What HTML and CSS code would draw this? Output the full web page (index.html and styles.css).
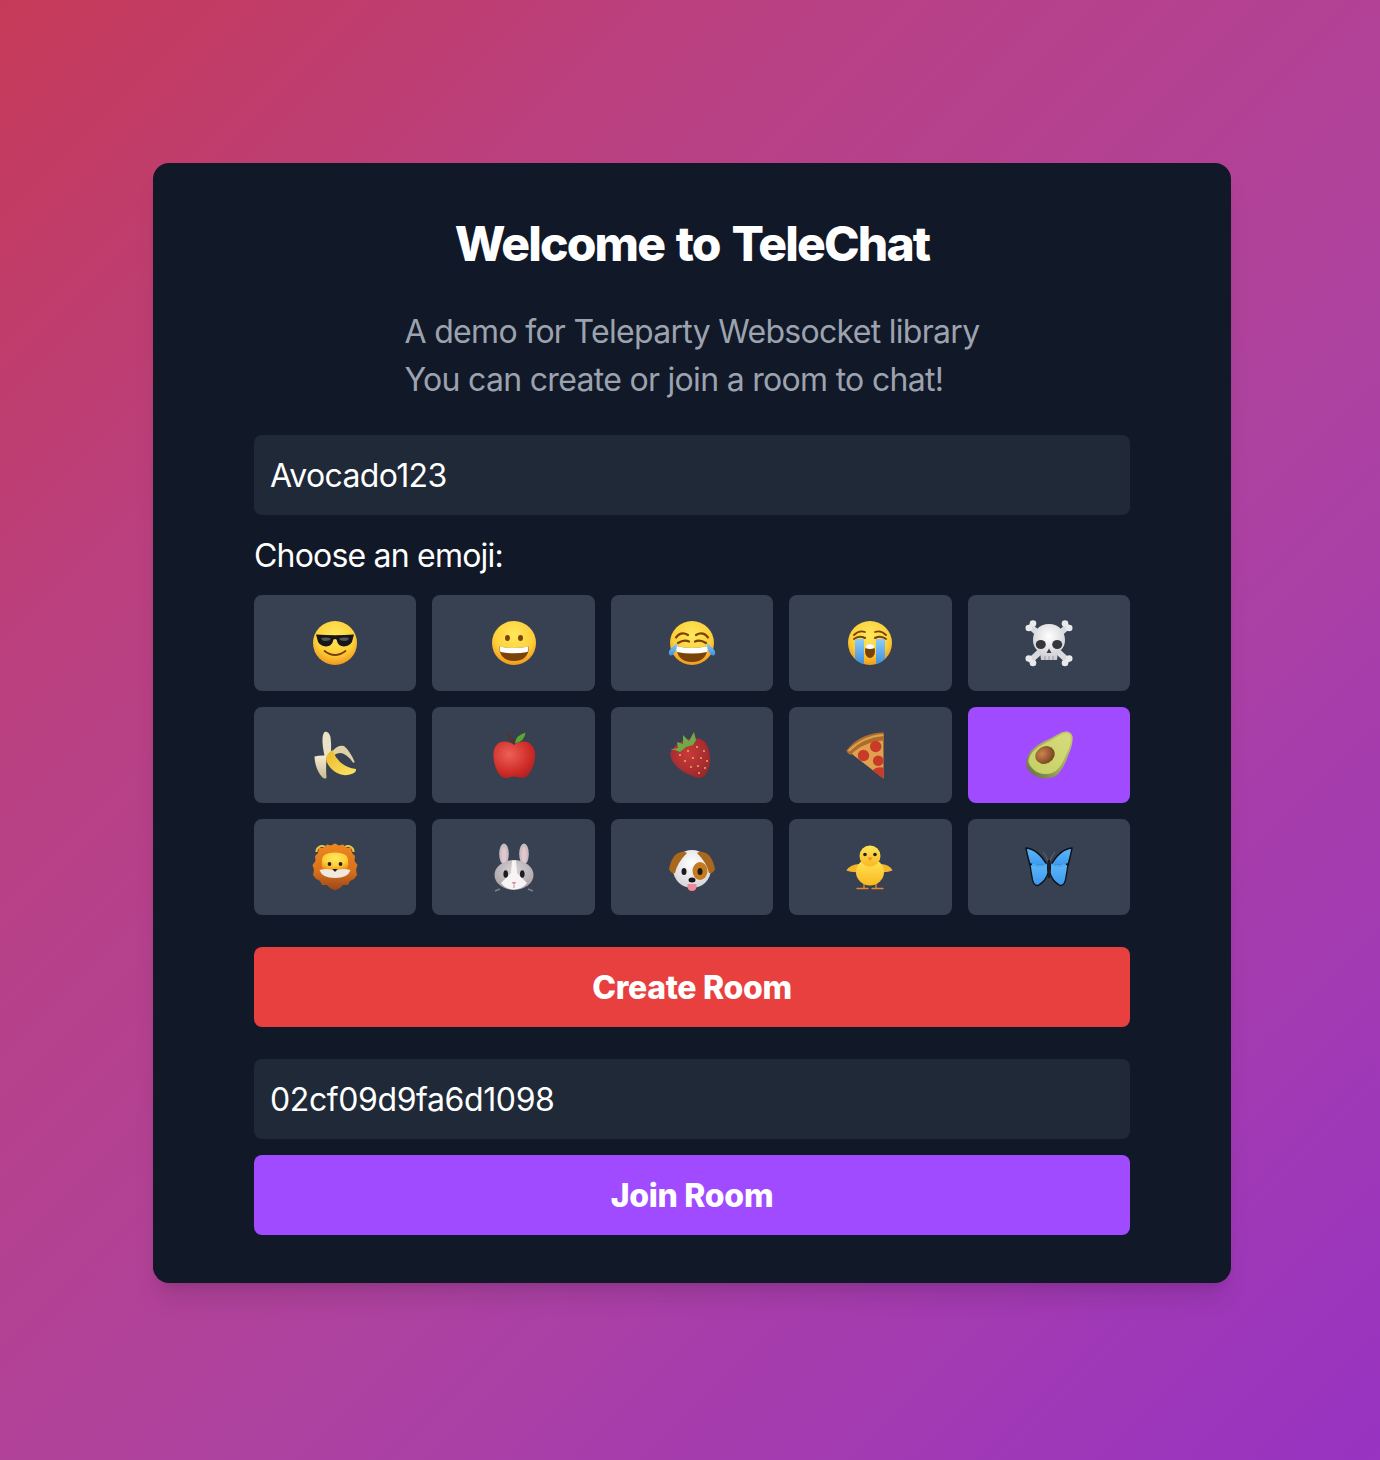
FILE: index.html
```html
<!DOCTYPE html>
<html lang="en">
<head>
<meta charset="utf-8">
<title>TeleChat</title>
<link rel="stylesheet" href="styles.css">
</head>
<body>
<main class="card">
  <h1 class="title">Welcome to TeleChat</h1>
  <p class="subtitle">A demo for Teleparty Websocket library<br>You can create or join a room to chat!</p>
  <div class="stack">
    <input class="field name" type="text" value="Avocado123" aria-label="Nickname">
    <div class="label">Choose an emoji:</div>
    <div class="emoji-grid">
      <button class="emoji-btn" aria-label="smiling face with sunglasses"><svg class="emoji" viewBox="0 0 48 48">
        <defs>
          <radialGradient id="face" cx=".5" cy=".32" r=".72"><stop offset="0" stop-color="#ffe85c"/><stop offset=".62" stop-color="#fdcf38"/><stop offset="1" stop-color="#ef8f1a"/></radialGradient>
          <linearGradient id="tear" x1="0" y1="0" x2="0" y2="1"><stop offset="0" stop-color="#8ccdf5"/><stop offset="1" stop-color="#3f8fe0"/></linearGradient>
          <radialGradient id="red" cx=".38" cy=".35" r=".78"><stop offset="0" stop-color="#ec6156"/><stop offset=".65" stop-color="#cf2b27"/><stop offset="1" stop-color="#a31e22"/></radialGradient>
          <radialGradient id="straw" cx=".45" cy=".4" r=".7"><stop offset="0" stop-color="#c93a3a"/><stop offset="1" stop-color="#98252a"/></radialGradient>
          <linearGradient id="yellowfruit" x1="0" y1="0" x2="1" y2="1"><stop offset="0" stop-color="#edb925"/><stop offset="1" stop-color="#fbe46a"/></linearGradient>
          <linearGradient id="peel" x1="0" y1="0" x2="0" y2="1"><stop offset="0" stop-color="#f4ecd2"/><stop offset="1" stop-color="#c9bb90"/></linearGradient>
          <radialGradient id="bone" cx=".5" cy=".35" r=".78"><stop offset="0" stop-color="#ffffff"/><stop offset="1" stop-color="#c2c3c7"/></radialGradient>
          <linearGradient id="avoskin" x1="1" y1="0" x2="0" y2="1"><stop offset="0" stop-color="#c5cc6c"/><stop offset=".6" stop-color="#9ba35a"/><stop offset="1" stop-color="#5f6648"/></linearGradient>
          <linearGradient id="avoflesh" x1="1" y1="0" x2="0" y2="1"><stop offset="0" stop-color="#d6db7c"/><stop offset="1" stop-color="#c3d063"/></linearGradient>
          <radialGradient id="pit" cx=".4" cy=".35" r=".8"><stop offset="0" stop-color="#cc864c"/><stop offset="1" stop-color="#66341a"/></radialGradient>
          <linearGradient id="chick" x1="0" y1="0" x2="0" y2="1"><stop offset="0" stop-color="#ffe65a"/><stop offset="1" stop-color="#f9b820"/></linearGradient>
          <linearGradient id="wing" x1="0" y1="0" x2="0" y2="1"><stop offset="0" stop-color="#5cb8fa"/><stop offset="1" stop-color="#3c96ee"/></linearGradient>
          <linearGradient id="mane" x1="0" y1="0" x2="0" y2="1"><stop offset="0" stop-color="#ee8a1e"/><stop offset=".6" stop-color="#d8701b"/><stop offset="1" stop-color="#9a451a"/></linearGradient>
          <radialGradient id="white" cx=".5" cy=".35" r=".75"><stop offset="0" stop-color="#ffffff"/><stop offset="1" stop-color="#cfcfd3"/></radialGradient>
          <radialGradient id="rabbit" cx=".5" cy=".35" r=".8"><stop offset="0" stop-color="#d8d4d6"/><stop offset="1" stop-color="#9e979c"/></radialGradient>
        </defs>
        <circle cx="24" cy="24" r="22" fill="url(#face)"/>
        <path d="M5 15.500Q24 17 43 15.500L42 19Q41 27 33 27.500Q27 27.500 25.500 20.500Q24 19.500 22.500 20.500Q21 27.500 15 27.500Q7 27 6 19Z" fill="#17171a"/>
        <path d="M10 19Q16 18 20 19.500Q19 22 14 22Q11 22 10 19ZM28 19.500Q33 18 38 19Q37 22 34 22Q29 22 28 19.500Z" fill="#55575c"/>
        <path d="M13.500 32Q24 40 34.500 32" fill="none" stroke="#7a3d08" stroke-width="1.800" stroke-linecap="round"/>
      </svg></button>
      <button class="emoji-btn" aria-label="grinning face"><svg class="emoji" viewBox="0 0 48 48">
        <circle cx="24" cy="24" r="22" fill="url(#face)"/>
        <ellipse cx="17.500" cy="19" rx="2.500" ry="3" fill="#7a4209"/>
        <ellipse cx="30.500" cy="19" rx="2.500" ry="3" fill="#7a4209"/>
        <path d="M9 27.500Q24 30.500 39 27.500Q38.500 42 24 42Q9.500 42 9 27.500Z" fill="#7a4209"/>
        <path d="M9.500 27.500Q24 30.500 38.500 27.500Q38.500 31 37.500 33Q24 35.500 10.500 33Q9.500 31 9.500 27.500Z" fill="#fff"/>
      </svg></button>
      <button class="emoji-btn" aria-label="face with tears of joy"><svg class="emoji" viewBox="0 0 48 48">
        <circle cx="24" cy="24" r="22" fill="url(#face)"/>
        <path d="M8 18.500Q13 12 20 16M40 18.500Q35 12 28 16" fill="none" stroke="#7a4209" stroke-width="2.200" stroke-linecap="round"/>
        <path d="M10 24Q16 20 21 22.500M38 24Q32 20 27 22.500" fill="none" stroke="#7a4209" stroke-width="2.200" stroke-linecap="round"/>
        <path d="M8 27Q24 31 40 27Q39 43 24 43Q9 43 8 27Z" fill="#7a4209"/>
        <path d="M8 27Q24 31 40 27Q40 31 39 33Q24 36 9 33Q8 31 8 27Z" fill="#fff"/>
        <path d="M9 24Q9 30 7 33Q4 38 1.500 36Q-.5 33 3 29.500Q6 26.500 9 24Z" fill="url(#tear)"/>
        <path d="M39 24Q39 30 41 33Q44 38 46.500 36Q48.500 33 45 29.500Q42 26.500 39 24Z" fill="url(#tear)"/>
      </svg></button>
      <button class="emoji-btn" aria-label="loudly crying face"><svg class="emoji" viewBox="0 0 48 48">
        <circle cx="24" cy="24" r="22" fill="url(#face)"/>
        <path d="M8 16Q13 11 19 13M40 16Q35 11 29 13" fill="none" stroke="#7a4209" stroke-width="1.800" stroke-linecap="round"/>
        <path d="M8 20Q13 16 19 19M40 20Q35 16 29 19" fill="none" stroke="#7a4209" stroke-width="2" stroke-linecap="round"/>
        <path d="M9 20H18V45Q13 44 9 39.500ZM30 20H39V39.500Q35 44 30 45Z" fill="url(#tear)"/>
        <ellipse cx="24" cy="32" rx="5" ry="7" fill="#7a4209"/>
        <path d="M19.500 29Q20 25 24 25Q28 25 28.500 29Q24 31 19.500 29Z" fill="#fff"/>
      </svg></button>
      <button class="emoji-btn" aria-label="skull and crossbones"><svg class="emoji" viewBox="0 0 48 48">
        <g stroke="#d9dadd" stroke-width="6" stroke-linecap="round"><path d="M6 8L42 41"/><path d="M42 8L6 41"/></g>
        <g fill="#e8e9eb"><circle cx="3.800" cy="9" r="3.300"/><circle cx="8" cy="4.500" r="3.300"/><circle cx="44.200" cy="9" r="3.300"/><circle cx="40" cy="4.500" r="3.300"/><circle cx="3.800" cy="39.500" r="3.300"/><circle cx="8" cy="44" r="3.300"/><circle cx="44.200" cy="39.500" r="3.300"/><circle cx="40" cy="44" r="3.300"/></g>
        <path d="M24 5C14 5 8 12 8 21C8 27 11 31 15 33L16 41H32L33 33C37 31 40 27 40 21C40 12 34 5 24 5Z" fill="url(#bone)"/>
        <ellipse cx="15.800" cy="25.500" rx="5" ry="4.600" fill="#35353a"/>
        <ellipse cx="32.200" cy="25.500" rx="5" ry="4.600" fill="#35353a"/>
        <path d="M24 29.500L26.500 34H21.500Z" fill="#3c3c42"/>
        <path d="M20 37V41M24 37V41M28 37V41" stroke="#9a9ba0" stroke-width="1"/>
      </svg></button>
      <button class="emoji-btn" aria-label="banana"><svg class="emoji" viewBox="0 0 48 48">
        <path d="M14 .8Q18 .5 19.500 6Q20.500 13 20 21L14 27Q11 14 11.500 7Q12 2 14 .8Z" fill="#ebe3c6"/>
        <path d="M22 19.500Q27 13.500 33 15Q39 20 43.500 30.500Q44 32 42 31.500Q36 23 30 22Q25 22 22 25Z" fill="#dfd2a6"/>
        <path d="M3.500 25.500Q8 24 16 24.500Q14.500 34 15.500 47Q13.500 48.500 11 46Q4 38 3.500 25.500Z" fill="url(#peel)"/>
        <path d="M21.500 19Q24 26 29 31Q36 37 45 38Q45.500 41 42 42.500Q33 46 26 42Q16.500 36.500 15 28Q16 22 21.500 19Z" fill="url(#yellowfruit)"/>
      </svg></button>
      <button class="emoji-btn" aria-label="red apple"><svg class="emoji" viewBox="0 0 48 48">
        <path d="M24 13.500C18 9.500 10 9.500 6.500 14C3 18 3 24 4 30C5.500 39 10 47 15.500 47C19 47.200 21 45.500 24 45.500C27 45.500 29 47.200 32.500 47C38 47 42.500 39 44.500 30C45.500 24 45.500 18 41.500 14C38 9.500 30 9.500 24 13.500Z" fill="url(#red)"/>
        <path d="M24 13Q23 8 17 3.500" fill="none" stroke="#5c3322" stroke-width="1.700" stroke-linecap="round"/>
        <path d="M25 12.500Q26 4 35.500 1.500Q35 10 25 12.500Z" fill="#5aa832"/>
      </svg></button>
      <button class="emoji-btn" aria-label="strawberry"><svg class="emoji" viewBox="0 0 48 48">
        <path d="M2.500 21Q10 9 23 7.500Q38 5 41 20Q44 34 38 43Q34 49 27 46Q12 41 5 31Q2 26 2.500 21Z" fill="url(#straw)"/>
        <path d="M2 18.500L10 17L9 11L15 13L15 4L21 10L26 1L28 9L25 14L18 16L12 21L7 19Z" fill="#6faa4a"/>
        <g fill="#e8c25a"><circle cx="12" cy="24" r=".9"/><circle cx="20" cy="20" r=".9"/><circle cx="29" cy="16" r=".9"/><circle cx="36" cy="20" r=".9"/><circle cx="17" cy="30" r=".9"/><circle cx="25" cy="27" r=".9"/><circle cx="33" cy="27" r=".9"/><circle cx="39" cy="30" r=".9"/><circle cx="23" cy="36" r=".9"/><circle cx="30" cy="35" r=".9"/><circle cx="37" cy="37" r=".9"/><circle cx="31" cy="42" r=".9"/></g>
      </svg></button>
      <button class="emoji-btn" aria-label="pizza"><svg class="emoji" viewBox="0 0 48 48">
        <path d="M2 20L37.500 5L37.500 47.500Z" fill="#e0a050"/>
        <path d="M.3 19.500Q14 2 37.500 1.300L38 9.500Q17 11 4.500 24Q1 22.500 .3 19.500Z" fill="#ad6c2a"/>
        <path d="M2.500 20Q17 5.500 37.500 4" fill="none" stroke="#dca052" stroke-width="2"/>
        <g fill="#c93b26"><circle cx="29.700" cy="15.500" r="5.700"/><circle cx="17.500" cy="24.500" r="5.700"/><circle cx="32.200" cy="29.700" r="5.300"/><path d="M37.500 36.500L37.500 47.500L26.500 39.500Q30 35 37.500 36.500Z"/></g>
      </svg></button>
      <button class="emoji-btn active" aria-label="avocado"><svg class="emoji" viewBox="0 0 48 48">
        <path d="M41.700 .3Q47.500 1.500 47.700 7.300Q47.500 15 43.300 24Q40 34 35 40.700Q30 47 23.300 47.300Q14 48 8.300 44Q1 39 1 32.300Q1.500 25 6.700 19Q11.500 14 18.300 10.700Q26 7.500 31.700 4Q37 .5 41.700 .3Z" fill="url(#avoskin)"/>
        <path d="M41 2Q46 3 46 8Q45.500 15 41 24Q38 32 33 38Q28 43 21 43Q12 43 7 37Q3 33 3.500 29Q5 23 9 19.500Q14 15 19.500 12.500Q27 9 32.500 5.500Q37 2.500 41 2Z" fill="url(#avoflesh)"/>
        <ellipse cx="20" cy="24" rx="10" ry="8.500" transform="rotate(-30 20 24)" fill="url(#pit)"/>
      </svg></button>
      <button class="emoji-btn" aria-label="lion"><svg class="emoji" viewBox="0 0 48 48">
        <path d="M5.500 9A5.500 5.500 0 0 1 14 4M42.500 9A5.500 5.500 0 0 0 34 4" fill="none" stroke="#f0c542" stroke-width="2"/>
        <path d="M24 .5L28 2.500L32 1.500L36 5L40 5L41 10L44 13L43.500 18L46.500 22L45 27L46 32L43 36L39 38L37 42L32 42L29 45L24 47.500L19 45L16 42L11 42L9 38L5 36L2 32L3 27L1.500 22L4.500 18L4 13L7 10L8 5L12 5L16 1.500L20 2.500Z" fill="url(#mane)"/>
        <path d="M11 16Q12 9.500 24 9.500Q36 9.500 37 16Q38 22 36 27H12Q10 22 11 16Z" fill="url(#face)"/>
        <path d="M8.500 27Q18 24.500 24 28Q30 24.500 39.500 27Q37 35 24 35Q11 35 8.500 27Z" fill="#f0e9de"/>
        <circle cx="18.500" cy="21" r="1.900" fill="#2a1a0c"/>
        <circle cx="29.500" cy="21" r="1.900" fill="#2a1a0c"/>
        <path d="M21.500 26H26.500L24 29Z" fill="#2a1a0c"/>
      </svg></button>
      <button class="emoji-btn" aria-label="rabbit"><svg class="emoji" viewBox="0 0 48 48">
        <ellipse cx="14" cy="11" rx="4.800" ry="10.500" fill="#c7bec3"/>
        <ellipse cx="34" cy="11" rx="4.800" ry="10.500" fill="#c7bec3"/>
        <ellipse cx="14" cy="12" rx="2.400" ry="8" fill="#e5c6cf"/>
        <ellipse cx="34" cy="12" rx="2.400" ry="8" fill="#e5c6cf"/>
        <path d="M10 46L5 48M38 46L43 48" stroke="#78818c" stroke-width="1.400"/>
        <ellipse cx="24" cy="32" rx="19.500" ry="15" fill="url(#rabbit)"/>
        <path d="M22 17.500H26L27 30L37 40Q32 46.500 24 46.500Q16 46.500 11 40L21 30Z" fill="#f6f4f4"/>
        <ellipse cx="15.700" cy="31" rx="2.300" ry="3.800" fill="#1e1c20"/>
        <ellipse cx="32.300" cy="31" rx="2.300" ry="3.800" fill="#1e1c20"/>
        <path d="M21.500 39H26.500L24 42Z" fill="#e58aa0"/>
        <path d="M24 42V45" stroke="#a39ca1" stroke-width="1"/>
      </svg></button>
      <button class="emoji-btn" aria-label="dog"><svg class="emoji" viewBox="0 0 48 48">
        <circle cx="24" cy="26" r="19" fill="url(#white)"/>
        <ellipse cx="32" cy="28" rx="7.500" ry="9" fill="#c47a1e"/>
        <path d="M13 9Q4 11 1 26Q3 31 7 30Q9 20 19 10Q16 8 13 9Z" fill="#a9681c"/>
        <path d="M35 9Q44 11 47 26Q45 31 41 30Q39 20 29 10Q32 8 35 9Z" fill="#a9681c"/>
        <ellipse cx="16" cy="28.500" rx="2.500" ry="3.500" fill="#1c1a1c"/>
        <ellipse cx="32" cy="28.500" rx="2.500" ry="3.500" fill="#1c1a1c"/>
        <ellipse cx="24" cy="37" rx="3.500" ry="2.500" fill="#18161a"/>
        <path d="M19.500 41H28.500V44Q28 48 24 48Q20 48 19.500 44Z" fill="#ec8a9a"/>
      </svg></button>
      <button class="emoji-btn" aria-label="front-facing baby chick"><svg class="emoji" viewBox="0 0 48 48">
        <path d="M16 21Q5 20 .3 27.500Q6 30 15 29ZM32 21Q43 20 46.500 27.500Q41 30 33 29Z" fill="#f5b52a"/>
        <path d="M18 41V45M30 41V45M11 45.500H22M26 45.500H37" fill="none" stroke="#e0862a" stroke-width="1.400" stroke-linecap="round"/>
        <ellipse cx="24" cy="29" rx="14" ry="13.500" fill="url(#chick)"/>
        <circle cx="24" cy="13" r="10.500" fill="url(#chick)"/>
        <circle cx="19" cy="11.500" r="1.800" fill="#23201c"/>
        <circle cx="29" cy="11.500" r="1.800" fill="#23201c"/>
        <path d="M21.500 14.500H26.500L24 18Z" fill="#ef8f2b"/>
      </svg></button>
      <button class="emoji-btn" aria-label="butterfly"><svg class="emoji" viewBox="0 0 48 48">
        <path d="M1 5Q13 6 22 22Q17 25 5 22Q2 11 1 5Z" fill="url(#wing)" stroke="#0f1114" stroke-width="1.500" stroke-linejoin="round"/>
        <path d="M47 5Q35 6 26 22Q31 25 43 22Q46 11 47 5Z" fill="url(#wing)" stroke="#0f1114" stroke-width="1.500" stroke-linejoin="round"/>
        <path d="M5 21Q16 24 22.500 21L23 30Q21 38 13 42.500Q8 43 7 34Q6 29 5 21Z" fill="url(#wing)" stroke="#0f1114" stroke-width="1.300" stroke-linejoin="round"/>
        <path d="M43 21Q32 24 25.500 21L25 30Q27 38 35 42.500Q40 43 41 34Q42 29 43 21Z" fill="url(#wing)" stroke="#0f1114" stroke-width="1.300" stroke-linejoin="round"/>
        <path d="M7 21.500Q16 24 22 21.500M41 21.500Q32 24 26 21.500" fill="none" stroke="#4aa8f4" stroke-width="2.400"/>
        <path d="M23 18Q21 12 18 9M25 18Q27 12 30 9" fill="none" stroke="#6a7079" stroke-width=".8"/>
        <path d="M22.800 17H25.200L25 35H23Z" fill="#221c1c"/>
      </svg></button>
    </div>
    <button class="action create">Create Room</button>
    <input class="field room" type="text" value="02cf09d9fa6d1098" aria-label="Room ID">
    <button class="action join">Join Room</button>
  </div>
</main>
</body>
</html>
```

FILE: styles.css
```css
* { box-sizing: border-box; }
html, body { margin: 0; }
body {
  min-height: 1460px;
  display: flex;
  align-items: flex-start;
  justify-content: center;
  padding: 163px 0 0 4px;
  font-family: Inter, "Noto Sans", sans-serif;
  background: linear-gradient(135deg, #c63a58 0%, #ba4080 25%, #ae42a0 60%, #9833c2 100%);
  color: #fff;
}
.card {
  width: 1078px;
  height: 1120px;
  padding: 48px 101px;
  background: #111827;
  border-radius: 16px;
  box-shadow: 0 20px 25px -5px rgba(0,0,0,.1), 0 8px 10px -6px rgba(0,0,0,.1);
  display: flex;
  flex-direction: column;
  align-items: center;
}
.title {
  margin: 0 0 31px;
  font-size: 48px;
  line-height: 66px;
  font-weight: 800;
  letter-spacing: -1.85px;
  word-spacing: 3px;
  text-align: center;
}
.subtitle {
  margin: 0 0 31px;
  font-size: 32px;
  line-height: 48px;
  letter-spacing: -.7px;
  color: #9ca3af;
}
.stack { width: 100%; display: flex; flex-direction: column; }
.field {
  height: 80px;
  width: 100%;
  padding: 0 16px;
  border: 0;
  border-radius: 8px;
  background: #1f2937;
  color: #fff;
  font: 32px Inter, sans-serif;
  outline: none;
}
.name { letter-spacing: -.65px; }
.room { letter-spacing: -.4px; }
.label { margin: 16px 0 14px; font-size: 32px; line-height: 50px; letter-spacing: -.8px; }
.emoji-grid {
  display: grid;
  grid-template-columns: repeat(5, 1fr);
  gap: 16px;
  margin-bottom: 32px;
}
.emoji-btn {
  height: 96px;
  padding: 0;
  border: 0;
  border-radius: 8px;
  background: #374151;
  display: flex;
  align-items: center;
  justify-content: center;
}
.emoji-btn.active { background: #a04bff; }
.emoji { width: 48px; height: 48px; display: block; overflow: visible; }
.action {
  height: 80px;
  width: 100%;
  border: 0;
  border-radius: 8px;
  color: #fff;
  font: 800 32px Inter, sans-serif;
  letter-spacing: -.3px;
}
.create { background: #e8403f; margin-bottom: 32px; }
.join { background: #a04bff; margin-top: 16px; }
```
